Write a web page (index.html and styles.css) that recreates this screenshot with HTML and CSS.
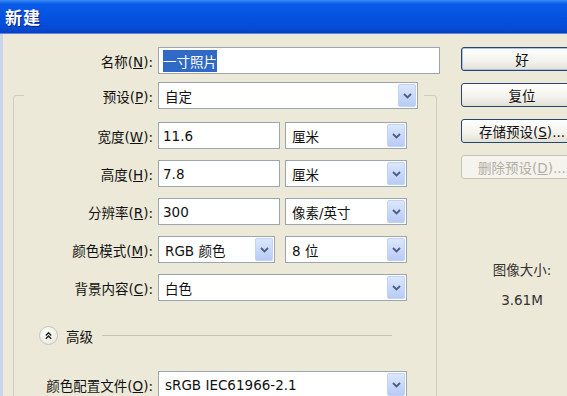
FILE: index.html
```html
<!DOCTYPE html>
<html>
<head>
  <title>新建</title>
  <link rel="stylesheet" href="styles.css">
</head>
<body>
  <div class="window">
    <div class="titlebar"><span class="title">新建</span></div>

    <div class="content">
      <div class="main">
        <div class="name-row">
          <label class="name-label">名称(<u>N</u>):</label>
          <div class="field name-field"><span class="selected">一寸照片</span></div>
        </div>

        <fieldset class="group">
          <legend class="preset">
            <label class="preset-label">预设(<u>P</u>):</label>
            <div class="combo preset-combo">自定
              <span class="arrow"><svg viewBox="0 0 9 6"><path d="M1 1l3.5 3.5L8 1"/></svg></span>
            </div>
          </legend>

          <div class="rows">
            <div class="row">
              <label class="lbl">宽度(<u>W</u>):</label>
              <div class="field small">11.6</div>
              <div class="combo unit">厘米
                <span class="arrow"><svg viewBox="0 0 9 6"><path d="M1 1l3.5 3.5L8 1"/></svg></span>
              </div>
            </div>
            <div class="row">
              <label class="lbl">高度(<u>H</u>):</label>
              <div class="field small">7.8</div>
              <div class="combo unit">厘米
                <span class="arrow"><svg viewBox="0 0 9 6"><path d="M1 1l3.5 3.5L8 1"/></svg></span>
              </div>
            </div>
            <div class="row">
              <label class="lbl">分辨率(<u>R</u>):</label>
              <div class="field small">300</div>
              <div class="combo unit">像素/英寸
                <span class="arrow"><svg viewBox="0 0 9 6"><path d="M1 1l3.5 3.5L8 1"/></svg></span>
              </div>
            </div>
            <div class="row">
              <label class="lbl">颜色模式(<u>M</u>):</label>
              <div class="combo mode">RGB 颜色
                <span class="arrow"><svg viewBox="0 0 9 6"><path d="M1 1l3.5 3.5L8 1"/></svg></span>
              </div>
              <div class="combo unit">8 位
                <span class="arrow"><svg viewBox="0 0 9 6"><path d="M1 1l3.5 3.5L8 1"/></svg></span>
              </div>
            </div>
            <div class="row">
              <label class="lbl">背景内容(<u>C</u>):</label>
              <div class="combo wide">白色
                <span class="arrow"><svg viewBox="0 0 9 6"><path d="M1 1l3.5 3.5L8 1"/></svg></span>
              </div>
            </div>
          </div>

          <div class="advanced">
            <span class="toggle"><svg viewBox="0 0 10 10"><path d="M2 5l3-3 3 3M2 8.5l3-3 3 3"/></svg></span>
            <span class="adv-text">高级</span>
            <span class="adv-line"></span>
          </div>

          <div class="row profile-row">
            <label class="lbl">颜色配置文件(<u>O</u>):</label>
            <div class="combo wide">sRGB IEC61966-2.1
              <span class="arrow"><svg viewBox="0 0 9 6"><path d="M1 1l3.5 3.5L8 1"/></svg></span>
            </div>
          </div>
        </fieldset>
      </div>

      <div class="side">
        <button class="btn default">好</button>
        <button class="btn">复位</button>
        <button class="btn">存储预设(<u>S</u>)...</button>
        <button class="btn" disabled>删除预设(<u>D</u>)...</button>

        <div class="info">
          <p>图像大小:</p>
          <p>3.61M</p>
        </div>
      </div>
    </div>
  </div>
</body>
</html>
```

FILE: styles.css
```css
body {
  margin: 0;
  width: 567px;
  height: 396px;
  overflow: hidden;
  font-family: "DejaVu Sans", "Noto Sans CJK SC", sans-serif;
  font-size: 13.5px;
  color: #111;
  background-color: #ece9d8;
}

.window {
  height: 396px;
  overflow: hidden;
}

.titlebar {
  height: 33px;
  display: flex;
  align-items: center;
  padding-left: 5px;
  background: linear-gradient(#3a8cf5 0%, #0a5ce8 12%, #0553e0 50%, #054cd6 85%, #0a3fbf 100%);
  border-bottom: 1px solid #5d86d8;
}

.title {
  color: #fff;
  font-family: "Noto Sans CJK SC", sans-serif;
  font-size: 17px;
  font-weight: bold;
  text-shadow: 1px 1px 0 #0a1f80;
  letter-spacing: 1px;
}

.content {
  display: flex;
  height: 362px;
  overflow: hidden;
  border-left: 3px solid #c9d5ec;
}

.main {
  width: 437px;
  flex-shrink: 0;
}

.name-row {
  display: flex;
  align-items: center;
  gap: 5px;
  padding-top: 13px;
}

.name-label {
  width: 150px;
  text-align: right;
}

.field {
  box-sizing: border-box;
  height: 27px;
  display: flex;
  align-items: center;
  padding-left: 4px;
  background-color: #fff;
  border: 1px solid #9aa6b0;
}

.name-field {
  width: 282px;
}

.selected {
  background-color: #316ac5;
  color: #fff;
  padding: 1px 0;
}

.group {
  box-sizing: border-box;
  width: 424px;
  height: 330px;
  margin: 8px 0 0 10px;
  padding: 0;
  border: 1px solid #cfcdbd;
  border-radius: 3px;
}

.preset {
  display: flex;
  align-items: center;
  gap: 5px;
  margin-left: 10px;
  padding: 0 6px 0 0;
}

.preset-label {
  width: 129px;
  text-align: right;
}

.combo {
  box-sizing: border-box;
  height: 27px;
  display: flex;
  align-items: center;
  justify-content: space-between;
  padding: 0 1px 0 6px;
  background-color: #fff;
  border: 1px solid #9aa6b0;
}

.preset-combo {
  width: 260px;
}

.arrow {
  box-sizing: border-box;
  width: 18px;
  height: 23px;
  display: flex;
  align-items: center;
  justify-content: center;
  background: linear-gradient(#dce7fd, #b7cbf5);
  border: 1px solid #c2d2f4;
  border-radius: 2px;
}

.arrow svg {
  width: 9px;
  height: 6px;
  fill: none;
  stroke: #4b5f86;
  stroke-width: 1.8;
}

.rows {
  display: flex;
  flex-direction: column;
  gap: 11px;
  padding-top: 13px;
}

.row {
  display: flex;
  align-items: center;
  gap: 5px;
}

.lbl {
  width: 139px;
  text-align: right;
  white-space: nowrap;
}

.small {
  width: 122px;
}

.unit {
  width: 122px;
}

.mode {
  width: 117px;
  margin-right: 5px;
}

.wide {
  width: 249px;
}

.advanced {
  display: flex;
  align-items: center;
  height: 19px;
  margin-top: 25px;
  padding-left: 25px;
}

.toggle {
  box-sizing: border-box;
  width: 19px;
  height: 19px;
  display: flex;
  align-items: center;
  justify-content: center;
  border-radius: 50%;
  background: radial-gradient(circle at 40% 35%, #ffffff, #e4e2d8);
  border: 1px solid #c9c6b8;
}

.toggle svg {
  width: 9px;
  height: 9px;
  fill: none;
  stroke: #222;
  stroke-width: 1.6;
}

.adv-text {
  margin-left: 8px;
}

.adv-line {
  width: 290px;
  height: 1px;
  margin-left: 9px;
  background-color: #c6c3b2;
}

.profile-row {
  margin-top: 26px;
}

.side {
  display: flex;
  flex-direction: column;
  gap: 12px;
  width: 122px;
  flex-shrink: 0;
  margin-left: 21px;
  padding-top: 13px;
}

.btn {
  box-sizing: border-box;
  height: 24px;
  width: 122px;
  padding: 0;
  font-family: inherit;
  font-size: 13.5px;
  color: #111;
  white-space: nowrap;
  background: linear-gradient(#ffffff, #f3f2ec 60%, #e3e1d5);
  border: 1px solid #27466f;
  border-radius: 3px;
}

.btn.default {
  box-shadow: inset 0 0 0 1px #a9c3ee;
}

.btn:disabled {
  color: #b2afa2;
  border-color: #c8c6b8;
  background: #f4f3ee;
}

.info {
  margin-top: 70px;
  text-align: center;
  color: #333;
}

.info p {
  margin: 0 0 12px;
  line-height: 18px;
}
```
